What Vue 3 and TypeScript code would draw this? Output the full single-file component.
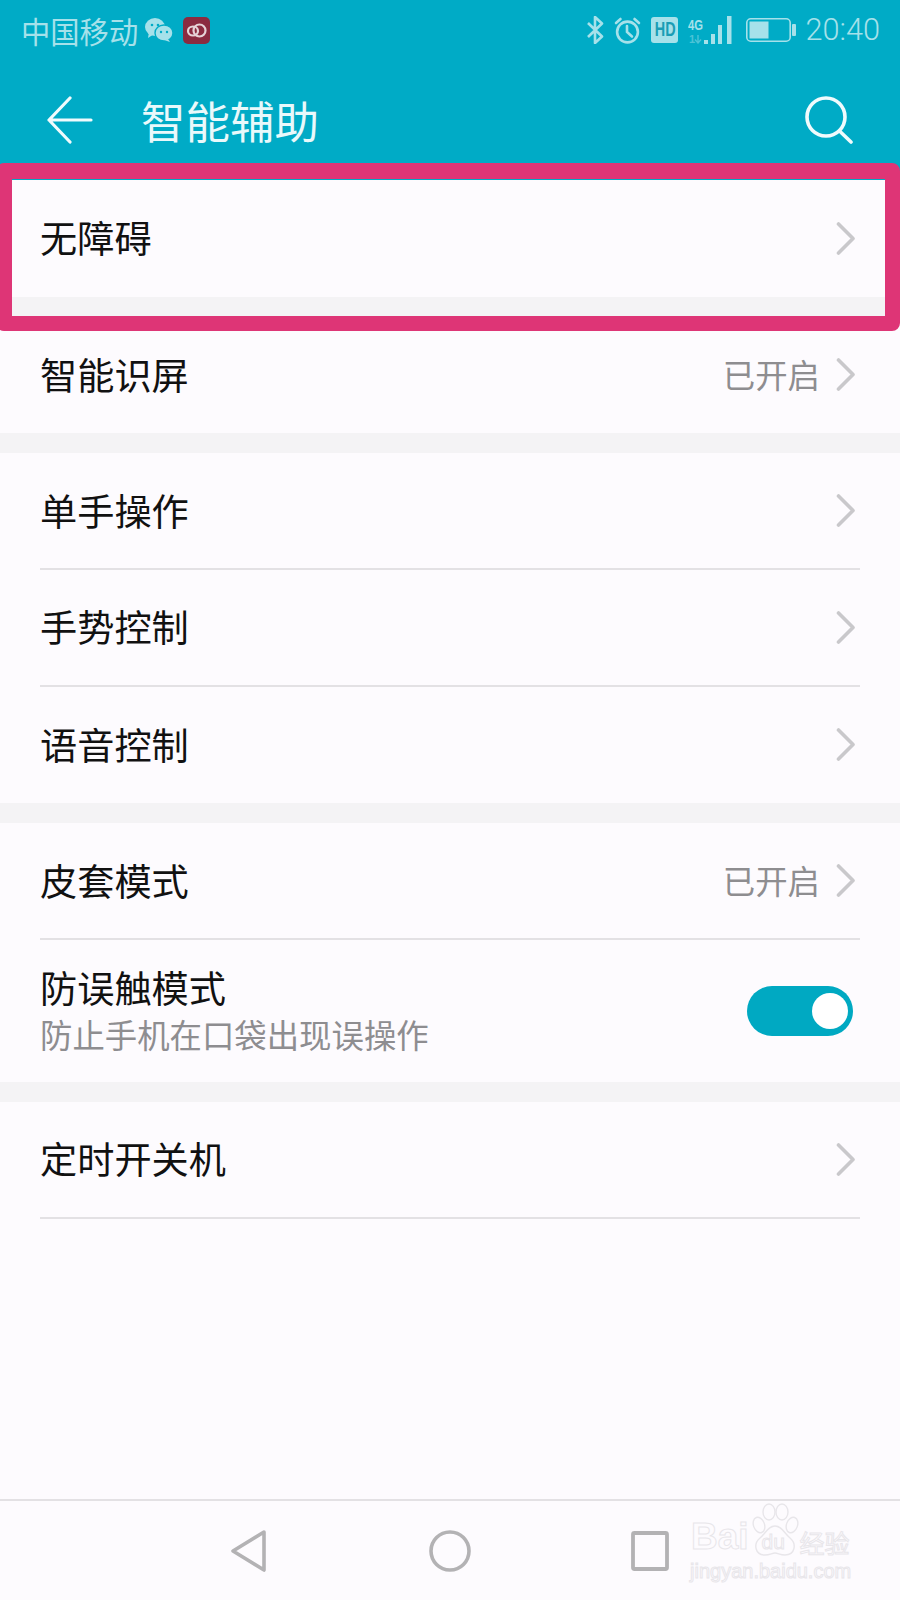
<template>
  <div class="phone">
    <header class="head">
      <div class="status">
        <span class="carrier">中国移动</span>
        <svg class="wechat" width="28" height="24" viewBox="0 0 28 24">
          <ellipse cx="10" cy="9" rx="10" ry="9" fill="#a6e1ea" />
          <path d="M4 14 L3 20 L9 16 Z" fill="#a6e1ea" />
          <ellipse cx="19" cy="15" rx="9" ry="8" fill="#a6e1ea" stroke="#00abc6" stroke-width="1.4" />
          <path d="M23 21 L25 24 L19 22 Z" fill="#a6e1ea" />
          <circle cx="7" cy="7" r="1.3" fill="#00abc6" />
          <circle cx="13" cy="7" r="1.3" fill="#00abc6" />
          <circle cx="16" cy="14" r="1.2" fill="#00abc6" />
          <circle cx="22" cy="14" r="1.2" fill="#00abc6" />
        </svg>
        <div class="app-badge">
          <svg width="21" height="15" viewBox="0 0 21 15" fill="none" stroke="#e6d3d7" stroke-width="2.2">
            <ellipse cx="7" cy="8" rx="5" ry="4.5" />
            <ellipse cx="13.5" cy="7.5" rx="6" ry="6" />
          </svg>
        </div>

        <div class="spacer" />

        <svg class="ic" width="18" height="28" viewBox="0 0 18 28" fill="none" stroke="#a6e1ea" stroke-width="2.6" stroke-linejoin="round">
          <path d="M2 7 L16 20.5 L9 27 V1 L16 7.5 L2 21" />
        </svg>
        <svg class="ic" width="27" height="27" viewBox="0 0 27 27" fill="none" stroke="#a6e1ea" stroke-width="2.6" stroke-linecap="round">
          <circle cx="13.5" cy="15" r="10.4" />
          <path d="M13 9 V15 L18 19.5" />
          <path d="M2 6 L6.5 2 M25 6 L20.5 2" />
        </svg>
        <div class="hd"><span>HD</span></div>
        <svg class="ic" width="44" height="28" viewBox="0 0 44 28">
          <text class="net" transform="translate(0 14) scale(0.75 1)">4G</text>
          <text class="net faint" x="1" y="27">1</text>
          <path d="M10 19 V27 M7 23.5 L10 27 L13 23.5" fill="none" stroke="#a6e1ea" stroke-width="1.4" opacity="0.45" />
          <rect x="16" y="24" width="4" height="4" fill="#a6e1ea" />
          <rect x="23" y="18" width="4" height="10" fill="#a6e1ea" />
          <rect x="30" y="9" width="4" height="19" fill="#a6e1ea" />
          <rect x="39" y="0" width="4.5" height="28" fill="#a6e1ea" />
        </svg>
        <svg class="ic batt" width="50" height="24" viewBox="0 0 50 24">
          <rect x="0.8" y="0.8" width="43.4" height="22.4" rx="4" fill="none" stroke="#a6e1ea" stroke-width="1.6" />
          <rect x="3.5" y="3.5" width="19" height="17" fill="#a6e1ea" />
          <rect x="46" y="6" width="4" height="12" rx="1" fill="#a6e1ea" />
        </svg>
        <span class="clock">20:40</span>
      </div>

      <div class="toolbar">
        <svg width="46" height="48" viewBox="0 0 46 48" fill="none" stroke="#f0fbfd" stroke-width="3.2" stroke-linecap="round" stroke-linejoin="round">
          <path d="M23 2 L2 24 L23 46 M2 24 H44" />
        </svg>
        <h1 class="title">智能辅助</h1>
        <div class="spacer" />
        <svg width="48" height="48" viewBox="0 0 48 48" fill="none" stroke="#f0fbfd" stroke-width="3.6" stroke-linecap="round">
          <circle cx="21" cy="21" r="19" />
          <path d="M34.5 35 L46 46" />
        </svg>
      </div>
    </header>

    <main class="list">
      <section v-for="(group, i) in groups" :key="i" class="group">
        <div
          v-for="item in group"
          :key="item.label"
          class="row"
          :class="{ tall: item.sub, lined: item.lined }"
        >
          <div class="row-text">
            <div class="label">{{ item.label }}</div>
            <div v-if="item.sub" class="sub">{{ item.sub }}</div>
          </div>
          <span v-if="item.value" class="value">{{ item.value }}</span>
          <div v-if="item.toggle" class="toggle"><span class="knob" /></div>
          <svg v-else class="chev" width="20" height="33" viewBox="0 0 20 33" fill="none" stroke="#c9c8cb" stroke-width="3.6" stroke-linecap="round" stroke-linejoin="round">
            <path d="M2.5 2 L17 16.5 L2.5 31" />
          </svg>
        </div>
      </section>
    </main>

    <nav class="nav">
      <svg width="36" height="42" viewBox="0 0 36 42" fill="none" stroke="#b3b2b4" stroke-width="3.6" stroke-linejoin="round">
        <path d="M33 2 L2 21 L33 40 Z" />
      </svg>
      <svg class="home" width="42" height="42" viewBox="0 0 42 42" fill="none" stroke="#b3b2b4" stroke-width="3.6">
        <circle cx="21" cy="21" r="19" />
      </svg>
      <svg width="38" height="40" viewBox="0 0 38 40" fill="none" stroke="#b3b2b4" stroke-width="3.8" stroke-linejoin="round">
        <rect x="2" y="2" width="34" height="36" rx="1.5" />
      </svg>
    </nav>

    <div class="frame" />

    <div class="mark">
      <div class="mark-top">
        <span class="mark-bai">Bai</span>
        <span class="paw">
          <svg width="50" height="54" viewBox="0 0 50 54" fill="#fdfbfe" stroke="#e8e6ea" stroke-width="1.4">
            <ellipse cx="9" cy="22" rx="5.5" ry="8" transform="rotate(-20 9 22)" />
            <ellipse cx="19" cy="9" rx="6" ry="8" />
            <ellipse cx="32" cy="9" rx="6" ry="8" />
            <ellipse cx="42" cy="22" rx="5.5" ry="8" transform="rotate(20 42 22)" />
            <path d="M25 23 C32 23 34 30 40 35 C47 41 45 52 35 52 C30 52 28 50 25 50 C22 50 20 52 15 52 C5 52 3 41 10 35 C16 30 18 23 25 23 Z" />
          </svg>
          <span class="mark-du">du</span>
        </span>
        <span class="mark-cn">经验</span>
      </div>
      <div class="mark-url">jingyan.baidu.com</div>
    </div>
  </div>
</template>

<script setup lang="ts">
interface Item {
  label: string
  value?: string
  sub?: string
  toggle?: boolean
  lined?: boolean
}

const groups: Item[][] = [
  [{ label: '无障碍' }],
  [{ label: '智能识屏', value: '已开启' }],
  [
    { label: '单手操作', lined: true },
    { label: '手势控制', lined: true },
    { label: '语音控制' },
  ],
  [
    { label: '皮套模式', value: '已开启', lined: true },
    { label: '防误触模式', sub: '防止手机在口袋出现误操作', toggle: true },
  ],
  [{ label: '定时开关机', lined: true }],
]
</script>

<style>
html, body { background: #fdfbfe; }
</style>

<style scoped>
.phone {
  position: relative;
  width: 900px;
  height: 1600px;
  display: flex;
  flex-direction: column;
  overflow: hidden;
  background: #fdfbfe;
  font-family: "Noto Sans CJK SC", "Liberation Sans", sans-serif;
}
.head {
  height: 180px;
  flex-shrink: 0;
  background: #00abc6;
}
.status {
  height: 60px;
  display: flex;
  align-items: center;
  padding: 0 20px 0 21px;
  color: #a6e1ea;
}
.carrier { font-size: 29.3px; line-height: 60px; }
.wechat { margin-left: 7px; }
.app-badge {
  width: 27px;
  height: 27px;
  margin-left: 10px;
  border-radius: 5px;
  background: #8b2b40;
  display: flex;
  align-items: center;
  justify-content: center;
}
.spacer { flex: 1; }
.ic { margin-right: 10px; flex-shrink: 0; }
.hd {
  width: 27px;
  height: 26px;
  margin-right: 10px;
  flex-shrink: 0;
  border-radius: 3px;
  background: #a6e1ea;
  color: #1a9db5;
  font: bold 17px/26px "Liberation Sans", sans-serif;
  text-align: center;
}
.hd span {
  display: inline-block;
  transform: scale(0.85, 1.2);
}
.net {
  font: bold 15px "Liberation Sans", sans-serif;
  fill: #a6e1ea;
}
.net.faint { opacity: 0.45; font-size: 11px; }
.batt { margin: 0 9px 0 4px; }
.clock {
  font: 300 30.7px/60px Roboto, sans-serif;
}
.toolbar {
  height: 104px;
  padding: 16px 47px 0;
  box-sizing: border-box;
  display: flex;
  align-items: center;
}
.title {
  margin: 0 0 0 48px;
  font-size: 44.5px;
  font-weight: 400;
  line-height: 60px;
  color: #e9f9fb;
}
.list {
  flex: 1;
  display: flex;
  flex-direction: column;
  gap: 20px;
  background: #f4f3f5;
}
.group { background: #fdfbfe; }
.group:last-child { flex: 1; }
.row {
  height: 116.67px;
  margin: 0 40px;
  padding-right: 4px;
  box-sizing: border-box;
  display: flex;
  align-items: center;
}
.row.tall { height: 142px; padding-right: 7px; }
.row.lined { border-bottom: 2px solid #e3e1e4; }
.row-text { flex: 1; margin-top: -2px; }
.label {
  font-size: 37.2px;
  line-height: 48px;
  color: #111;
}
.sub {
  margin-top: 1px;
  font-size: 32.4px;
  line-height: 44px;
  color: #8e8d90;
}
.value {
  margin-right: 16px;
  margin-top: -2px;
  font-size: 32.4px;
  color: #8e8d90;
}
.toggle {
  width: 106px;
  height: 50px;
  padding-right: 5px;
  box-sizing: border-box;
  border-radius: 25px;
  background: #00a9c2;
  display: flex;
  align-items: center;
  justify-content: flex-end;
}
.knob {
  width: 36px;
  height: 36px;
  border-radius: 50%;
  background: #fff;
}
.nav {
  height: 99px;
  flex-shrink: 0;
  border-top: 2px solid #e3e1e4;
  display: flex;
  align-items: center;
  justify-content: center;
  gap: 161px;
  background: #fdfbfe;
}
.home { margin-left: 1px; margin-right: -1px; }
.frame {
  position: absolute;
  left: -4px;
  right: 0;
  top: 163px;
  height: 168px;
  box-sizing: border-box;
  border: solid #de3576;
  border-width: 16px 15px 15px 16px;
  border-radius: 8px;
  pointer-events: none;
}
.mark {
  position: absolute;
  left: 690px;
  top: 1503px;
  width: 164px;
  font-family: "Liberation Sans", sans-serif;
  color: #fdfbfe;
  -webkit-text-stroke: 1px #e8e6ea;
}
.mark-top {
  display: flex;
  align-items: flex-end;
  height: 54px;
}
.mark-bai { font: bold 37px/40px "Liberation Sans", sans-serif; margin-left: 1px; }
.paw { position: relative; width: 50px; height: 54px; margin-left: 1px; }
.mark-du {
  position: absolute;
  left: 12px;
  top: 28px;
  font-size: 21px;
  line-height: 22px;
}
.mark-cn {
  font: 25px/32px "Noto Sans CJK SC", sans-serif;
  margin-bottom: -1px;
}
.mark-url {
  margin-top: 2px;
  font-size: 20px;
  line-height: 24px;
  white-space: nowrap;
}
</style>
